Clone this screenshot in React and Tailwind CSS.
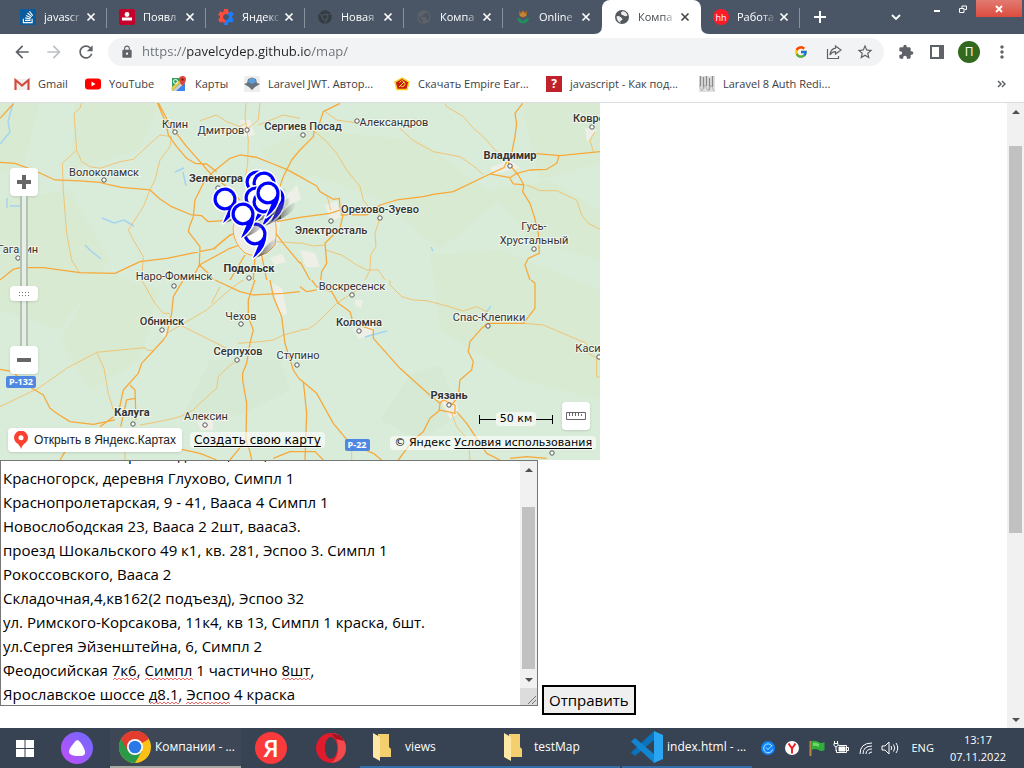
import { useLayoutEffect, useRef } from "react";
import { FaStackOverflow, FaChrome } from "react-icons/fa";
import { FcGoogle } from "react-icons/fc";
import {
  MdArrowBack,
  MdArrowForward,
  MdRefresh,
  MdLock,
  MdStarBorder,
  MdExtension,
  MdMoreVert,
  MdPublic,
  MdSettings,
} from "react-icons/md";

/* ---------- favicons ---------- */

const Stack = () => (
  <span className="flex size-4 items-center justify-center bg-[#0a5c9e] text-white">
    <FaStackOverflow className="size-3.5" />
  </span>
);
const Person = () => (
  <svg viewBox="0 0 16 16" className="size-4">
    <rect width="16" height="16" rx="2" fill="#c5002b" />
    <circle cx="8" cy="5.5" r="2.4" fill="#fff" />
    <path d="M3 8.5h10v3H3z" fill="#fff" />
  </svg>
);
const Gear = () => (
  <span className="relative size-4">
    <MdSettings className="absolute -left-0.5 -top-0.5 size-5 text-[#ff4b3e] [clip-path:polygon(0_0,75%_0,35%_100%,0_100%)]" />
    <MdSettings className="absolute -left-0.5 -top-0.5 size-5 text-[#1a7dff] [clip-path:polygon(75%_0,100%_0,100%_100%,35%_100%)]" />
  </span>
);
const Tulip = () => (
  <svg viewBox="0 0 16 16" className="size-4">
    <path d="M4 1.500l2 2 2-2.500 2 2.500 2-2V6q-1 2.500-4 2.500T4 6z" fill="#a5662c" />
    <path d="M8 3v5M6 4.500v2.500M10 4.500v2.500" stroke="#e0a93c" />
    <path d="M2 9q4 0 6 3.500Q10 9 14 9q-1 5-6 5.500-5-.5-6-5.500z" fill="#1f8f5c" />
  </svg>
);
const Hh = () => (
  <span className="flex size-4 items-center justify-center rounded-full bg-[#ff1a2a] text-[9px] leading-none text-white">
    hh
  </span>
);

/* globe with light land masses on a dark disc */
const Globe = () => (
  <svg viewBox="0 0 16 16" className="size-4">
    <circle cx="8" cy="8" r="7" fill="currentColor" />
    <path
      d="M2.500 7.500q2-1 4 .5t2 2.200-1.500 1.300-.2 2.300Q3 13 2.500 7.500zM8.500 2.300q3.500.2 5 4-1.500 1.500-3 .7T8.200 6 7 4.500t1.500-2.200z"
      fill="#fff"
      className="opacity-90"
    />
  </svg>
);

const tabs = [
  { title: "javascr", icon: <Stack /> },
  { title: "Появл", icon: <Person /> },
  { title: "Яндекс", icon: <Gear /> },
  { title: "Новая", icon: <FaChrome className="size-3.5 text-[#363c44]" /> },
  { title: "Компа", icon: <MdPublic className="size-4 text-[#5f6368]" /> },
  { title: "Online", icon: <Tulip /> },
  { title: "Компа", icon: <span className="text-[#54585d]"><Globe /></span>, active: true },
  { title: "Работа", icon: <Hh /> },
];

function Tab({ title, icon, active }) {
  return (
    <div
      className={
        active
          ? "relative flex h-full w-[99px] items-center rounded-t-lg bg-white pl-3 pr-2 text-[#45494e]"
          : "relative flex h-full w-[99px] items-center pl-3 pr-2 text-white"
      }
    >
      <span className="flex size-4 shrink-0 items-center justify-center">{icon}</span>
      <span className="ml-2 w-[39px] overflow-hidden whitespace-nowrap text-[11px] [mask-image:linear-gradient(to_right,black_65%,transparent)]">
        {title}
      </span>
      <button aria-label={"Закрыть " + title} className="ml-auto flex size-4 items-center justify-center">
        <svg viewBox="0 0 10 10" className="size-2.5">
          <path d="M1.500 1.500l7 7M8.500 1.500l-7 7" stroke="currentColor" strokeWidth="1.700" />
        </svg>
      </button>
      {!active && title !== "Online" && <i className="absolute right-0 top-2 h-5 w-px bg-[#89919c]" />}
      {active && (
        <>
          <svg viewBox="0 0 8 8" className="absolute -left-2 bottom-0 size-2">
            <path d="M8 0v8H0q8 0 8-8z" fill="#fff" />
          </svg>
          <svg viewBox="0 0 8 8" className="absolute -right-2 bottom-0 size-2">
            <path d="M0 0v8h8q-8 0-8-8z" fill="#fff" />
          </svg>
        </>
      )}
    </div>
  );
}

function TabStrip() {
  return (
    <div className="flex h-[34px] bg-[#4a5666] pl-2">
      <div className="flex">
        {tabs.map((t, i) => (
          <Tab key={i} {...t} />
        ))}
      </div>
      <button aria-label="Новая вкладка" className="ml-2 flex w-6 items-center justify-center text-white">
        <svg viewBox="0 0 12 12" className="size-3">
          <path d="M6 0v12M0 6h12" stroke="currentColor" strokeWidth="2" />
        </svg>
      </button>
      <div className="ml-auto flex text-white">
        <button aria-label="Поиск вкладок" className="mr-4 flex w-6 items-center justify-center">
          <svg viewBox="0 0 10 6" className="h-1.5 w-2.5">
            <path d="M1 1l4 4 4-4" fill="none" stroke="currentColor" strokeWidth="1.800" />
          </svg>
        </button>
        <button aria-label="Свернуть" className="flex h-[17px] w-[26px] items-center justify-center">
          <i className="mt-1 h-0.5 w-1.5 bg-white" />
        </button>
        <button aria-label="Восстановить" className="flex h-[17px] w-[26px] items-center justify-center">
          <svg viewBox="0 0 8 8" className="size-2">
            <path d="M3 3V1h4.500v3.500H5.500M.5 3.500H5v4H.5z" fill="none" stroke="#fff" />
          </svg>
        </button>
        <button
          aria-label="Закрыть окно"
          className="mr-0.5 flex h-[17px] w-[46px] items-center justify-center bg-linear-to-b from-[#e07a70] to-[#dc4b3e]"
        >
          <svg viewBox="0 0 8 8" className="size-2">
            <path d="M1 1l6 6M7 1L1 7" stroke="#fff" strokeWidth="1.800" />
          </svg>
        </button>
      </div>
    </div>
  );
}

function Toolbar() {
  return (
    <div className="flex h-9 items-center bg-white pl-3 pr-3 text-[#5f6368]">
      <button aria-label="Назад" className="w-8"><MdArrowBack className="size-5" /></button>
      <button aria-label="Вперёд" className="w-8 text-[#bdc1c6]"><MdArrowForward className="size-5" /></button>
      <button aria-label="Обновить" className="w-8"><MdRefresh className="size-5" /></button>
      <div className="flex h-7 flex-1 items-center rounded-full bg-[#f1f3f4] pl-3 pr-2.5">
        <MdLock className="size-3.5 shrink-0" />
        <input
          aria-label="Адресная строка"
          defaultValue="https://pavelcydep.github.io/map/"
          className="ml-2 min-w-0 flex-1 bg-[linear-gradient(to_right,#6b6f74_44px,#202124_44px,#202124_167px,#6b6f74_167px)] bg-clip-text text-[13px] text-transparent outline-none"
        />
        <FcGoogle className="mx-2.5 size-3.5" />
        <button aria-label="Поделиться" className="mx-2">
          <svg viewBox="0 0 16 16" className="size-4" fill="none" stroke="currentColor" strokeWidth="1.200">
            <path d="M1.500 5v9.500h11V12" />
            <path d="M9.500 2l5.500 4-5.500 4V7.700Q6 7.600 4 11q.5-6 5.500-6.800z" />
          </svg>
        </button>
        <button aria-label="В закладки" className="ml-1.5"><MdStarBorder className="size-[18px]" /></button>
      </div>
      <button aria-label="Расширения" className="ml-3.5 w-8"><MdExtension className="size-4" /></button>
      <button aria-label="Боковая панель" className="w-7">
        <svg viewBox="0 0 14 14" className="size-3.5">
          <path d="M1 1h12v12H1z" fill="none" stroke="currentColor" strokeWidth="2" />
          <path d="M9 1h4v12H9z" fill="currentColor" />
        </svg>
      </button>
      <button
        aria-label="Профиль"
        className="flex size-[22px] items-center justify-center rounded-full bg-[#33691e] text-[12px] leading-none text-white"
      >
        П
      </button>
      <button aria-label="Меню" className="ml-3"><MdMoreVert className="size-5" /></button>
    </div>
  );
}

const bookmarks = [
  {
    label: "Gmail",
    box: "w-[71px]",
    icon: (
      <svg viewBox="0 0 16 16" className="size-4">
        <path d="M1 3h14v11H1z" fill="#f1f1f1" />
        <path d="M1.500 14V4L8 9.500 14.500 4v10" fill="none" stroke="#d54b3d" strokeWidth="2.200" />
      </svg>
    ),
  },
  {
    label: "YouTube",
    box: "w-[86px]",
    icon: (
      <svg viewBox="0 0 16 16" className="size-4">
        <rect y="2.500" width="16" height="11" rx="3" fill="#f00" />
        <path d="M6.500 5.500v5l4-2.500z" fill="#fff" />
      </svg>
    ),
  },
  {
    label: "Карты",
    box: "w-[73px]",
    icon: (
      <svg viewBox="0 0 16 16" className="size-4">
        <path d="M1 2h13v13H1z" fill="#35a463" />
        <path d="M1 15L14 3v12z" fill="#c9ced3" />
        <path d="M5 15l9-8v8z" fill="#3d83ee" />
        <path d="M0 12L11 2l1 2L1 15z" fill="#f4cb49" />
        <circle cx="4.500" cy="5.500" r="2" fill="none" stroke="#fff" />
        <path d="M11.500 10Q8 6 8 3.500a3.500 3.500 0 017 0Q15 6 11.500 10z" fill="#dd4638" />
        <circle cx="11.500" cy="3.500" r="1.200" fill="#7c231c" />
      </svg>
    ),
  },
  {
    label: "Laravel JWT. Автор...",
    box: "w-[150px]",
    icon: (
      <svg viewBox="0 0 16 16" className="size-4">
        <path d="M0 0h16v16H0z" fill="#eee" />
        <path d="M0 8l3-1 1-4 4-1.500L12 3l1 4 3 1-5 3-3 3-3-3z" fill="#67727c" />
        <path d="M4 6l1-3 3-1 3 1 1 3-4 2z" fill="#5b9fdc" />
      </svg>
    ),
  },
  {
    label: "Скачать Empire Ear...",
    box: "w-[152px]",
    icon: (
      <svg viewBox="0 0 16 16" className="size-4">
        <path d="M8 2l7 4-2 7.500H3L1 6z" fill="#c81a12" stroke="#f5d21c" strokeWidth="1.500" />
        <path d="M5 11l5-5M8 4.500q4.500 2.500 2 5.500Q8.500 11.500 6 9.500M5.500 6.500l2-2" fill="none" stroke="#ffe32e" />
      </svg>
    ),
  },
  {
    label: "javascript - Как под...",
    box: "w-[153px]",
    icon: (
      <span className="flex size-4 items-center justify-center bg-[#bf2228] text-[12px] font-bold leading-none text-white">
        ?
      </span>
    ),
  },
  {
    label: "Laravel 8 Auth Redi...",
    box: "w-[150px]",
    icon: (
      <svg viewBox="0 0 16 16" className="size-4">
        <path d="M0 0h16v16H0z" fill="#e0e0e0" />
        <path d="M1.500 0v10M4.500 1v12M7.500 0v10M10.500 2v12M13.500 0v11" stroke="#8a8a8a" strokeWidth="1.300" />
        <path d="M0 9l3 6 3-6 3 6 3-6 3 6" fill="none" stroke="#b5b5b5" />
      </svg>
    ),
  },
];

function Bookmarks() {
  return (
    <nav className="flex h-[33px] items-center border-b border-[#dadce0] bg-white pb-1 pl-3.5 pr-[18px] text-[11px] text-[#3c4043]">
      {bookmarks.map((b) => (
        <a key={b.label} href="#" className={"flex shrink-0 items-center gap-2 whitespace-nowrap " + b.box}>
          <span className="shrink-0">{b.icon}</span>
          {b.label}
        </a>
      ))}
      <button aria-label="Другие закладки" className="ml-auto">
        <svg viewBox="0 0 9 8" className="h-2 w-[9px]">
          <path d="M1 1l3 3-3 3M5 1l3 3-3 3" fill="none" stroke="#5f6368" strokeWidth="1.500" />
        </svg>
      </button>
    </nav>
  );
}

/* ---------- map ---------- */

const quadrants = [
  {
    at: "translate(0 100) scale(.3333)",
    major:
      "M472 8L498 70 505 105 530 140 560 175 585 190 620 192 650 215M475 8L510 75 560 140 600 185 635 225 680 260 720 300M0 187L45 190 100 210 165 240 240 243 300 247 330 255 365 262 450 270 480 297 515 320 575 345 605 347 625 365 672 362M900 230L860 208 820 192 770 172 720 165 690 175 640 215 610 250 585 300 580 350 570 375 565 395 600 440 598 495 625 520 640 540M0 540L40 508 60 503 130 503 240 518 345 520 420 485 500 475 640 447 660 430 690 405 710 400M575 540L598 495 690 445 720 435M0 55L40 12M830 365L900 352M820 390L850 430 900 490M735 465L690 540M765 470L760 540M785 465L800 540M900 150L875 180 850 230 840 260",
    minor:
      "M245 8L240 25 222 40 230 150 187 190 190 270 200 400 215 480 240 520M230 150L245 185 270 200 300 205 330 195 360 185 400 178 440 140 480 105 515 110 510 140 480 180 465 240 450 270 430 320 385 390 400 420 430 470 425 540M738 8L735 50 745 120 743 190 735 240M600 62L650 45 680 65 720 80 735 70M780 8L775 60 745 85M775 75L850 45 900 55M830 425L900 430M700 400L650 440 645 450",
  },
  {
    at: "translate(300 100) scale(.3333)",
    major:
      "M0 150L40 110 42 95 55 80 70 35 120 10M0 230L50 258 60 275 100 298 118 295 120 320 128 350 120 385 75 430 80 490 65 515 62 540M122 345L200 345 240 315 290 300 370 290 400 283 460 275 570 222 612 203 620 185M0 352L90 340 120 330M570 222L630 233 650 220 690 210 740 208 770 190 778 165M700 160L780 167 900 155M668 10L645 40 650 70 645 110 635 160 625 190 655 225 672 255 668 275 690 310 703 350 715 400 718 460 685 475 675 495 680 510 690 540M0 485L30 540M630 235L640 252 672 255",
    minor:
      "M75 35L110 60 165 68M45 95L80 125 110 160 140 210 180 260 190 300 205 320M240 315L235 370 225 400 228 440 212 465 210 510 195 540M0 428L40 438 75 435M75 450L125 465 170 495 200 510 235 510 255 540M300 85L340 122 400 155 480 170 530 205 550 225M435 10L440 20 490 50 520 85 550 110 590 155M680 255L720 272 770 272 830 300 845 345 865 370 900 388M885 95L870 120 880 155M82 290L92 330",
  },
  {
    at: "translate(0 280) scale(.3333)",
    major:
      "M550 0L520 50 515 100 500 165 490 180 425 250 415 280 370 330 355 400 300 440M0 268L40 275 60 300 80 315 130 345 150 385 170 400 210 425 280 433 345 420M645 0L720 35 760 45 850 40 900 35M765 0L745 60 745 110 760 150 750 190 740 250 728 280 728 300 740 370 738 480 750 515 755 540M810 0L820 50 845 110 855 190 880 270 900 300M390 315L405 330 408 420M405 355L380 360 362 440M545 508L600 520 650 540M735 485L690 540M820 535L870 515 900 515M180 540L195 515",
    minor:
      "M0 380L115 325 200 265 290 217 435 203 440 210 460 212M290 217L312 265 325 340 340 390M425 0L465 70 490 100 510 100M500 160L620 90 700 20 730 0M540 135L680 205M715 190L780 185 820 180 850 165 900 152M705 245L680 265 655 290 650 325 610 360 580 390 540 410 500 420 450 430 420 435M635 70L660 20M375 515L375 540",
  },
  {
    at: "translate(300 280) scale(.3333)",
    major:
      "M35 0L50 20 95 35 115 70 150 95 160 130 220 150 220 175 260 220 300 265 395 350 420 370M0 20L20 35 50 30M693 0L705 10 705 85 670 130 565 130 545 145 510 185 505 215 520 245 515 270 480 300 475 350 455 375M420 390L390 415 370 455 340 480 295 540M470 395L500 430 560 520 600 540M0 298L50 340 100 430 150 490 220 520 245 540M10 305L20 400 15 540M420 370L418 390 465 400 465 375 430 360zM630 535L680 530 740 535M0 515L45 515 70 540",
    minor:
      "M200 12L110 70 50 130 25 147 0 150M270 0L270 15 305 50 340 60 380 62 430 75 490 93 530 80 570 100M670 130L730 135 800 165 860 190 865 220 890 235 890 290 900 292M455 400L470 440 505 480 510 540M155 490L155 540",
  },
];

const cities = [
  ["Клин", 175, 128, 175, 132],
  ["Дмитров", 221, 134, 247, 130],
  ["Сергиев Посад", 303, 130, 303, 135, "m"],
  ["Александров", 394, 126, 357, 121],
  ["Ковро", 589, 122, 592, 127, "m"],
  ["Владимир", 510, 159, 510, 166, "b"],
  ["Волоколамск", 104, 176, 104, 180],
  ["Зеленогра", 216, 182, 218, 188, "b"],
  ["Орехово-Зуево", 380, 213, 380, 218, "m"],
  ["Электросталь", 331, 234, 331, 221, "m"],
  ["Гусь-", 534, 230, 0, 0],
  ["Хрустальный", 534, 244, 534, 249],
  ["Гагарин", 18, 253, 18, 258],
  ["Подольск", 249, 272, 249, 278, "b"],
  ["Наро-Фоминск", 174, 280, 174, 286],
  ["Воскресенск", 352, 290, 352, 295],
  ["Обнинск", 162, 325, 162, 330, "m"],
  ["Чехов", 241, 320, 241, 324],
  ["Коломна", 359, 326, 359, 331, "m"],
  ["Спас-Клепики", 489, 321, 488, 326],
  ["Серпухов", 238, 355, 237, 360, "m"],
  ["Ступино", 298, 359, 297, 365],
  ["Касим", 592, 352, 599, 357],
  ["Рязань", 449, 399, 449, 405, "b"],
  ["Калуга", 132, 416, 133, 424, "b"],
  ["Алексин", 206, 420, 205, 425],
];

const weights = { m: 500, b: 700 };

const pins = [
  [257, 182],
  [264, 183],
  [273, 198],
  [256, 198],
  [264, 202],
  [225, 199],
  [255, 234],
  [268, 193],
  [243, 214],
];

function Pin({ x, y }) {
  return (
    <g transform={`translate(${x} ${y})`}>
      <path d="M2 22Q12 10 20 5q4 0 0 7Q13 20 0 24z" fill="url(#shade)" />
      <path
        d="M11.500 0A11.500 11.500 0 10-1 11.500L3.500 11-2 24Q11.500 15 11.500 0z"
        fill="#00f"
        stroke="#fff"
        strokeWidth="3"
        paintOrder="stroke"
        strokeLinejoin="round"
      />
      <circle cx="0" cy="0" r="8.300" fill="#fff" />
    </g>
  );
}

function MapCanvas() {
  return (
    <svg viewBox="0 103 600 357" className="block h-[357px] w-[600px]" role="img" aria-label="Карта">
      <defs>
        <linearGradient id="shade">
          <stop offset="0" stopColor="#222" stopOpacity=".85" />
          <stop offset="1" stopColor="#888" stopOpacity=".1" />
        </linearGradient>
      </defs>
      <path d="M0 103h600v357H0z" fill="#d9ecd9" />
      <path
        d="M75 103L160 103 140 150 70 170zM0 200L70 190 110 260 60 330 0 310zM310 130L420 140 500 200 440 250 380 200 300 170zM430 255L500 250 600 290 600 400 520 380 440 330zM100 270L160 290 140 360 90 390 60 340zM520 103h80v60L540 180zM260 150l50-20 40 40-60 10zM0 103h40l-15 60-25 10zM490 190l60-10 50 30v50l-70-20z"
        fill="#d8ebd2"
      />
      <path d="M210 360l70 0 10 30-50 25-60 5zM410 375l30-10 20 50-40 25-40-20z" fill="#d5e9d4" />
      <g fill="#eef0e7">
        <path d="M245 200l25-15 12 25-5 35-18 15-22-15-5-20z" />
        <path d="M287 195l10-10 4 14-12 6zM270 258l12-4 4 8-11 3zM300 250l15 3 5 14-14 0zM272 283l10 5 5 26-8 2zM325 205l12-4 4 16-10 4zM490 168l20-8 10 8-26 6zM440 398l16 3 3 12-9 6zM353 329l20-4 0 8-14 6zM585 128l12 2-10 12zM355 300l8 0-2 8-5-2zM160 330l8 0-4 8zM197 422l16-2 0 10-12 0zM240 120l10 0 5 15-12 2z" />
      </g>
      <g fill="none" stroke="#a4d4f2" strokeWidth="1.500">
        <path d="M13 103L8 122 10 132 0 144M175 172l9-4M183 172l3 14M102 218l12 5 10-3 10 6M85 245l6 6 10 8M10 206h16M7 198v10M365 337l22-6M485 314l6-8M431 247l2 4" />
      </g>
      {quadrants.map((q) => (
        <g key={q.at} transform={q.at} fill="none" strokeLinejoin="round">
          <path d={q.minor} stroke="#f2bf6b" strokeWidth="2.700" />
          <path d={q.major} stroke="#f8a838" strokeWidth="3.800" />
        </g>
      ))}
      <path
        d="M240 212q20-10 34 5 4 10 1 28l-8 8q-12 5-22 0-12-10-12-25 2-12 7-16z"
        fill="#eceee6"
        stroke="#f8a838"
      />
      <g fontFamily="Roboto, sans-serif" fontSize="11" textAnchor="middle">
        {cities.map(([name, x, y, dx, dy, w]) => (
          <g key={name}>
            {dx > 0 && <circle cx={dx} cy={dy} r="2.200" fill="#fff" stroke="#555" />}
            <text
              x={x}
              y={y}
              fill="#333"
              stroke="#f4f8f1"
              strokeOpacity=".85"
              strokeWidth="2"
              paintOrder="stroke"
              fontWeight={weights[w] || 400}
            >
              {name}
            </text>
          </g>
        ))}
        <circle cx="552" cy="453" r="2.200" fill="#fff" stroke="#555" />
        <path d="M277 211h4v8h-8z" fill="#333" />
      </g>
      {pins.map(([x, y]) => (
        <Pin key={x + "-" + y} x={x} y={y} />
      ))}
      <g fontFamily='"Open Sans", sans-serif' fontSize="9" fontWeight="700" fill="#fff" textAnchor="middle">
        <rect x="6" y="376" width="30" height="12" rx="2" fill="#4f88e2" />
        <text x="21" y="385">P-132</text>
        <rect x="345" y="439" width="25" height="12" rx="2" fill="#4f88e2" />
        <text x="357" y="448">P-22</text>
      </g>
    </svg>
  );
}

function MapView() {
  return (
    <section className="relative w-[600px] overflow-hidden">
      <MapCanvas />
      <div className="absolute left-2.5 top-[65px] flex w-7 flex-col items-center">
        <button aria-label="Приблизить" className="flex size-7 items-center justify-center rounded-sm bg-white shadow">
          <svg viewBox="0 0 14 14" className="size-3.5">
            <path d="M7 0v14M0 7h14" stroke="#666" strokeWidth="4" />
          </svg>
        </button>
        <span className="h-[150px] w-2 border-x-2 border-[#a9b5a8]/80 bg-[#e6efe3]" />
        <button aria-label="Отдалить" className="flex size-7 items-center justify-center rounded-sm bg-white shadow">
          <i className="h-1 w-3.5 bg-[#666]" />
        </button>
        <button
          aria-label="Масштаб"
          className="absolute top-[118px] flex h-[15px] w-7 items-center justify-center rounded-sm bg-white shadow"
        >
          <svg viewBox="0 0 11 4" className="h-1 w-[11px]">
            <path d="M0 .5h11M0 3.500h11" stroke="#777" strokeDasharray="1 2" />
          </svg>
        </button>
      </div>
      <a
        href="#"
        className="absolute bottom-2 left-2 flex h-6 items-center gap-1.5 rounded-sm bg-white pl-1.5 pr-1.5 font-['Liberation_Sans',sans-serif] text-[12px] text-[#222] shadow"
      >
        <svg viewBox="0 0 14 18" className="h-[18px] w-3.5">
          <path d="M7 18Q6 14 2 11.500A7 7 0 1112 11.500Q8 14 7 18z" fill="#f8422f" />
          <circle cx="7" cy="6.800" r="2.500" fill="#fff" />
        </svg>
        Открыть в Яндекс.Картах
      </a>
      <a
        href="#"
        className="absolute bottom-3 left-[190px] rounded-sm bg-white/60 px-1 font-['DejaVu_Sans',sans-serif] text-[12px] leading-4 text-black underline underline-offset-2"
      >
        Создать свою карту
      </a>
      <p className="absolute bottom-2.5 right-1 rounded-sm bg-white/60 px-1 font-['DejaVu_Sans',sans-serif] text-[11px] leading-[14px] text-black">
        © Яндекс{" "}
        <a href="#" className="underline underline-offset-2">
          Условия использования
        </a>
      </p>
      <div className="absolute bottom-[34px] right-[47px] flex w-[74px] items-center font-['DejaVu_Sans',sans-serif] text-[11px] leading-[14px] text-black">
        <i className="h-[9px] w-px bg-black" />
        <i className="h-px flex-1 bg-black" />
        <span className="whitespace-nowrap rounded-sm bg-white/60 px-1">50 км</span>
        <i className="h-px flex-1 bg-black" />
        <i className="h-[9px] w-px bg-black" />
      </div>
      <button
        aria-label="Линейка"
        className="absolute bottom-[30px] right-2.5 flex size-7 items-center justify-center rounded-sm bg-white shadow"
      >
        <svg viewBox="0 0 20 8" className="h-2 w-5">
          <path d="M.5 .5h19v7H.5zM3.500 0v4M6.500 0v4M9.500 0v4M12.500 0v4M15.500 2v2" fill="none" stroke="#666" />
        </svg>
      </button>
    </section>
  );
}

/* ---------- form ---------- */

const Arrow = ({ down }) => (
  <svg viewBox="0 0 8 4" className="h-1 w-2">
    <path d={down ? "M0 0h8L4 4z" : "M0 4h8L4 0z"} fill="#505050" />
  </svg>
);

const addresses = [
  "Космонавтов квартал 1 дом 16, кв 8,",
  "Красногорск, деревня Глухово, Симпл 1",
  "Краснопролетарская, 9 - 41, Вааса 4 Симпл 1",
  "Новослободская 23, Вааса 2 2шт, вааса3.",
  "проезд Шокальского 49 к1, кв. 281, Эспоо 3. Симпл 1",
  "Рокоссовского, Вааса 2",
  "Складочная,4,кв162(2 подъезд), Эспоо 32",
  "ул. Римского-Корсакова, 11к4, кв 13, Симпл 1 краска, 6шт.",
  "ул.Сергея Эйзенштейна, 6, Симпл 2",
  "Феодосийская 7к6, Симпл 1 частично 8шт,",
  "Ярославское шоссе д8.1, Эспоо 4 краска",
].join("\n");

/* spelling marks: start x, end x, y inside the text box */
const marks = [
  [112, 137, 219],
  [144, 192, 219],
  [281, 310, 219],
  [149, 178, 243],
  [185, 229, 243],
];

function wave([from, to, y]) {
  let d = `M${from} ${y}`;
  for (let x = from, up = true; x < to; x += 2, up = !up) d += `l2 ${up ? -2 : 2}`;
  return d;
}

function AddressForm() {
  const box = useRef(null);
  useLayoutEffect(() => {
    box.current.scrollTop = 21;
  }, []);
  return (
    <form className="flex items-end gap-1" onSubmit={(e) => e.preventDefault()}>
      <div className="relative mb-[9px] flex h-[246px] w-[538px] border border-[#767676] bg-white">
        <textarea
          ref={box}
          aria-label="Адреса"
          spellCheck={false}
          defaultValue={addresses}
          className="h-full min-w-0 flex-1 resize-none overflow-y-auto whitespace-pre p-0.5 text-[15px] leading-6 text-black outline-none [scrollbar-width:none]"
        />
        <div className="flex w-[17px] flex-col items-center bg-[#f1f1f1]">
          <span className="flex h-[17px] items-center"><Arrow /></span>
          <span className="mt-[29px] w-[13px] flex-1 bg-[#c1c1c1]" />
          <span className="mt-0.5 flex h-[17px] items-center"><Arrow down /></span>
          <span className="flex h-[17px] w-full items-end justify-end bg-[#dcdcdc]">
            <svg viewBox="0 0 10 10" className="size-2.5">
              <path d="M1 9l8-8M5 9l4-4" stroke="#777" />
            </svg>
          </span>
        </div>
        <svg className="pointer-events-none absolute inset-0 h-full w-full" aria-hidden="true">
          {marks.map((m) => (
            <path key={m.join()} d={wave(m)} fill="none" stroke="#f04040" strokeWidth=".8" />
          ))}
        </svg>
      </div>
      <button className="h-[30px] border-2 border-black bg-[#efefef] px-[5px] text-[15px] leading-6 text-black">
        Отправить
      </button>
    </form>
  );
}

/* ---------- taskbar ---------- */

const Folder = () => (
  <svg viewBox="0 0 18 28" className="h-7 w-[18px]">
    <path d="M5 1h11v13l2 2v8H5z" fill="#f4cf6e" />
    <path d="M0 0l7 4v24l-7-4z" fill="#fde9a5" />
  </svg>
);

const Chrome = () => (
  <svg viewBox="0 0 32 32" className="size-8">
    <circle cx="16" cy="16" r="16" fill="#fbc116" />
    <path d="M16 16L2.100 8A16 16 0 0129.900 8z" fill="#e33b2e" />
    <path d="M16 16L2.100 8A16 16 0 0016 32l7-12z" fill="#2a9a48" />
    <path d="M9 20L2.100 8 16 8z" fill="#e33b2e" />
    <circle cx="16" cy="16" r="8" fill="#fff" />
    <circle cx="16" cy="16" r="6.300" fill="#2a78e8" />
  </svg>
);

const Code = () => (
  <svg viewBox="0 0 32 32" className="size-8">
    <path d="M23 0l9 4v24l-9 4z" fill="#2aa5f2" />
    <path d="M23 0v9L4 25l-4-3.500z" fill="#0a73bd" />
    <path d="M23 32v-9L4 7 0 10.500z" fill="#1386d2" />
  </svg>
);

const Start = () => (
  <svg viewBox="0 0 18 17" className="h-[17px] w-[18px]">
    <path d="M0 0h8.500v8H0zM9.500 0H18v8H9.500zM0 9h8.500v8H0zM9.500 9H18v8H9.500z" fill="#fff" />
  </svg>
);

function Taskbar() {
  return (
    <footer className="flex h-10 shrink-0 items-stretch bg-[#374252] text-[12px] text-white">
      <button aria-label="Пуск" className="flex w-[50px] items-center justify-center"><Start /></button>
      <button aria-label="Алиса" className="flex w-[54px] items-center justify-center">
        <svg viewBox="0 0 32 32" className="size-8">
          <defs>
            <linearGradient id="alice" x1="1" y1="0" x2="0" y2="1">
              <stop stopColor="#6a6bff" />
              <stop offset="1" stopColor="#c44dfc" />
            </linearGradient>
          </defs>
          <circle cx="16" cy="16" r="16" fill="url(#alice)" />
          <path d="M16 8q3 0 7 8.500T16 24t-7-7.500T16 8z" fill="#fff" />
        </svg>
      </button>
      <button className="ml-1.5 flex w-[131px] items-center gap-1 whitespace-nowrap border-b-2 border-[#a9a9a4] bg-[#3d4755] pl-[9px]">
        <Chrome />
        Компании - ...
      </button>
      <button aria-label="Яндекс" className="flex w-[60px] items-center justify-center">
        <span className="flex size-8 items-center justify-center rounded-full bg-[#fb3a3c] text-[24px] font-semibold leading-none">
          Я
        </span>
      </button>
      <button aria-label="Opera" className="flex w-[59px] items-center justify-center">
        <svg viewBox="0 0 30 30" className="size-[30px]">
          <circle cx="15" cy="15" r="15" fill="#e01b2b" />
          <path d="M15 0a15 15 0 010 30q7-4 7-15T15 0z" fill="#f14a4c" />
          <path d="M15 0q10 1 13 8l-8-2z" fill="#a51220" />
          <ellipse cx="15" cy="15" rx="6.200" ry="11" fill="#374252" />
        </svg>
      </button>
      <button className="flex w-[130px] items-center gap-3.5 border-b-2 border-[#2f6ea8] pl-[13px]">
        <Folder />
        views
      </button>
      <button className="flex w-[130px] items-center gap-3 border-b-2 border-[#2f6ea8] pl-3.5">
        <Folder />
        testMap
      </button>
      <button className="ml-0.5 flex w-[130px] items-center gap-1 whitespace-nowrap border-b-2 border-[#2f6ea8] pl-[9px]">
        <Code />
        index.html - ...
      </button>
      <div className="ml-auto flex items-center pr-[18px] text-[11px]">
        <svg viewBox="0 0 14 14" className="size-3.5">
          <circle cx="7" cy="7" r="7" fill="#0a84ff" />
          <path d="M11 5a4.500 4.500 0 10.500 3.500M5 6.500l2 2 4-4" fill="none" stroke="#cfe7ff" />
        </svg>
        <svg viewBox="0 0 14 14" className="ml-2.5 size-3.5">
          <circle cx="7" cy="7" r="7" fill="#fff" />
          <path d="M3.500 2.500L7 7.500l3.500-5M7 7v5.500" fill="none" stroke="#e22" strokeWidth="2" />
        </svg>
        <svg viewBox="0 0 16 16" className="ml-2.5 size-4">
          <path d="M1.500 1v15" stroke="#b98648" strokeWidth="2" />
          <path d="M2.500 1q4-1 7 1t6 0v8q-3 2-6 0t-7 0z" fill="#2eaf3b" />
          <path d="M4 3q3-1 6 1v3Q7 5 4 6z" fill="#74d66c" />
        </svg>
        <svg viewBox="0 0 16 14" className="ml-2 h-3.5 w-4" fill="none" stroke="#fff">
          <path d="M5.500 4.500h8v7h-10V9M14 6.500h1.500v3H14" />
          <path d="M6 6h6v4H6z" fill="#fff" />
          <path d="M1 2.500h4v2L3 6 1 4.500zM1.500 0v2M4.500 0v2M3 6v4" />
        </svg>
        <svg viewBox="0 0 14 14" className="ml-2.5 size-3.5" fill="none" stroke="#fff">
          <path d="M1 13Q1 2 13 2M4 13q0-8 9-8M7 13q0-5 6-5M10 13q0-2 3-2" />
        </svg>
        <svg viewBox="0 0 18 14" className="ml-2 h-3.5 w-[18px]" fill="none" stroke="#fff">
          <path d="M1 5h3l4-4v12L4 9H1zM10 5q1.500 2 0 4M12.500 3.500q2.500 3.500 0 7M15 2q3.500 5 0 10" />
        </svg>
        <span className="ml-3">ENG</span>
        <time className="ml-4 text-center leading-[17px]">
          13:17
          <br />
          07.11.2022
        </time>
      </div>
    </footer>
  );
}

export default function App() {
  return (
    <div className="flex min-h-screen flex-col bg-white font-['Open_Sans','Noto_Sans',sans-serif]">
      <header>
        <TabStrip />
        <Toolbar />
        <Bookmarks />
      </header>
      <div className="flex flex-1">
        <main className="min-w-0 flex-1">
          <MapView />
          <AddressForm />
        </main>
        <div className="flex w-[17px] flex-col items-center bg-[#f1f1f1]">
          <span className="flex h-[17px] items-center"><Arrow /></span>
          <span className="mt-[26px] h-[387px] w-[13px] bg-[#c1c1c1]" />
          <span className="mt-auto flex h-[17px] items-center"><Arrow down /></span>
        </div>
      </div>
      <Taskbar />
    </div>
  );
}
